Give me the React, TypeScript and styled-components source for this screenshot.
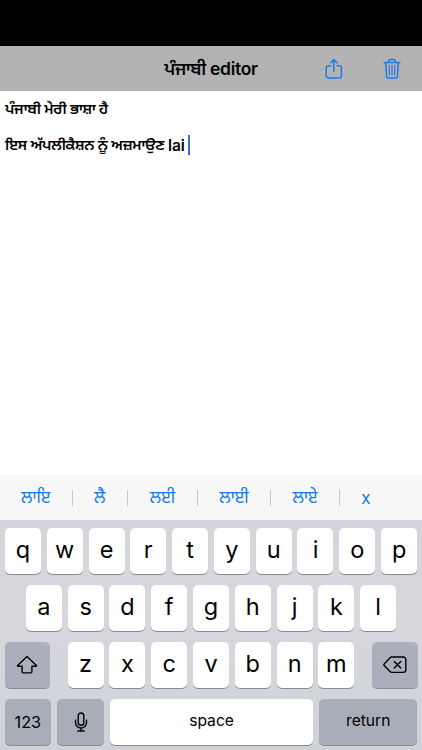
import React from "react";
import styled, { createGlobalStyle } from "styled-components";

const Global = createGlobalStyle`
  * { box-sizing: border-box; }
  html, body, #root { margin: 0; height: 100%; }
  body { background: #fff; overflow: hidden; }
`;

const Screen = styled.div`
  width: 422px;
  height: 750px;
  display: flex;
  flex-direction: column;
  background: #fff;
  font-family: Inter, "Noto Sans Gurmukhi", "Noto Sans", sans-serif;
  color: #000;
`;

const StatusBar = styled.div`
  height: 46px;
  flex: none;
  background: #000;
`;

const NavBar = styled.header`
  height: 45px;
  flex: none;
  display: grid;
  grid-template-columns: 1fr auto 1fr;
  align-items: center;
  background: #b3b3b3;
  border-bottom: 1px solid #b0b0b0;
`;

const Title = styled.h1`
  grid-column: 2;
  margin: 0;
  padding-top: 2px;
  font-size: 17.5px;
  line-height: 24px;
  font-weight: 600;
  letter-spacing: -0.3px;
  white-space: nowrap;
`;

const Actions = styled.div`
  display: flex;
  justify-content: flex-end;
  gap: 38px;
  padding: 1px 20px 0 0;
  color: #1f7ae8;
`;

const IconButton = styled.button`
  width: 20px;
  height: 24px;
  padding: 0;
  border: 0;
  background: none;
  color: inherit;
  svg { display: block; }
`;

const Editor = styled.main`
  flex: 1;
  padding: 0 5px;
  font-size: 15px;
  font-weight: 600;
  letter-spacing: -0.25px;
`;

const Line = styled.p`
  margin: 0;
  height: 36px;
  display: flex;
  align-items: center;
  white-space: pre;
`;

const Latin = styled.span`
  font-size: 15.5px;
  letter-spacing: -0.1px;
`;

const Caret = styled.span`
  width: 2px;
  height: 20px;
  margin-left: 3px;
  background: #4268d8;
`;

const Suggestions = styled.div`
  height: 45px;
  flex: none;
  display: flex;
  align-items: center;
  background: #f7f7f8;
`;

const Suggestion = styled.button<{ $w: number; $last?: boolean }>`
  width: ${(p) => p.$w}px;
  height: 16px;
  display: flex;
  align-items: center;
  justify-content: center;
  padding: ${(p) => (p.$last ? "0" : "2px 0 0")};
  border: 0;
  border-right: ${(p) => (p.$last ? "0" : "1px solid #c8c8cb")};
  background: none;
  color: #1478e6;
  font: inherit;
  font-size: 17px;
  white-space: nowrap;
`;

const Keyboard = styled.div`
  height: 230px;
  flex: none;
  display: flex;
  flex-direction: column;
  gap: 11px;
  padding: 8px 4.5px 0;
  background: linear-gradient(#d4d5db, #d7d8de 40%, #ced2d7);
`;

const Row = styled.div`
  height: 46px;
  display: flex;
  justify-content: center;
  gap: 5.8px;
`;

const SpreadRow = styled(Row)`
  justify-content: space-between;
`;

const Group = styled.div`
  display: flex;
  gap: 5.8px;
`;

const Key = styled.button<{ $w?: number }>`
  width: ${(p) => p.$w ?? 36}px;
  height: 46px;
  flex: none;
  display: flex;
  align-items: center;
  justify-content: center;
  padding: 0 0 4px;
  border: 0;
  border-radius: 5px;
  background: #fff;
  box-shadow: 0 1px 0 #898b90;
  color: #000;
  font: inherit;
  font-size: 23.5px;
  font-weight: 400;
`;

const WordKey = styled(Key)`
  font-size: 15.6px;
`;

const DarkKey = styled(WordKey)<{ $low?: boolean }>`
  background: ${(p) => (p.$low ? "#a7aeb8" : "linear-gradient(#adb0bc, #a9aeba)")};
`;

const SymbolKey = styled(DarkKey)`
  padding-bottom: 0;
  font-size: 16.3px;
`;

const ShareIcon = () => (
  <svg width="20" height="24" viewBox="0 0 20 24" fill="none" stroke="currentColor" strokeWidth="1.5" strokeLinecap="round" strokeLinejoin="round">
    <path d="M6.5 8.7H4.2A2 2 0 0 0 2.2 10.7v8.2a2 2 0 0 0 2 2h11.2a2 2 0 0 0 2-2V10.7a2 2 0 0 0-2-2h-2.3M9.8 14.5V2.7M6.7 5.7l3.1-3.1L12.9 5.7" />
  </svg>
);

const TrashIcon = () => (
  <svg width="20" height="24" viewBox="0 0 20 24" fill="none" stroke="currentColor" strokeWidth="1.5" strokeLinecap="round" strokeLinejoin="round">
    <path d="M2.2 5.5h15.6M6.8 5.3V3.8a1.4 1.4 0 0 1 1.4-1.4h3.6a1.4 1.4 0 0 1 1.4 1.4v1.5M3.7 5.6l.8 13.5a1.9 1.9 0 0 0 1.9 1.8h7.2a1.9 1.9 0 0 0 1.9-1.8l.8-13.5" />
    <path strokeWidth="1.1" d="M7.1 8.4l.3 9.6M10 8.4V18M12.9 8.4l-.3 9.6" />
  </svg>
);

const ShiftIcon = () => (
  <svg width="22" height="20" viewBox="0 0 22 20" fill="none" stroke="currentColor" strokeWidth="1.4" strokeLinejoin="round">
    <path d="M11 1.4 1.6 10.5c-.3.3-.1.7.3.7h4.2v5.6c0 .7.4 1.1 1.1 1.1h7.6c.7 0 1.1-.4 1.1-1.1v-5.6h4.2c.4 0 .6-.4.3-.7Z" />
  </svg>
);

const DeleteIcon = () => (
  <svg width="24" height="18" viewBox="0 0 24 18" fill="none" stroke="currentColor" strokeWidth="1.4" strokeLinecap="round" strokeLinejoin="round">
    <path d="M8.8 1h11.4a2.6 2.6 0 0 1 2.6 2.6v10.2a2.6 2.6 0 0 1-2.6 2.6H8.8a2.6 2.6 0 0 1-1.8-.8L1.2 9.6a1.2 1.2 0 0 1 0-1.7L7 1.8A2.6 2.6 0 0 1 8.8 1ZM11.3 5.4l6.5 6.6M17.8 5.4 11.3 12" />
  </svg>
);

const MicIcon = () => (
  <svg width="14" height="20" viewBox="0 0 14 20" fill="none" stroke="currentColor" strokeWidth="1.4" strokeLinecap="round">
    <rect x="4.2" y="1" width="5.6" height="12.2" rx="2.8" />
    <path d="M1.5 8.3v2.2a5.5 5.5 0 0 0 11 0V8.3M7 16.3V19M3.8 19h6.4" />
  </svg>
);

const words: [string, number][] = [
  ["ਲਾਇ", 72.5],
  ["ਲੈ", 55.5],
  ["ਲਈ", 70],
  ["ਲਾਈ", 73],
  ["ਲਾਏ", 69],
  ["x", 52],
];

const letters = (s: string) => s.split("").map((c) => <Key key={c}>{c}</Key>);

export default function App() {
  return (
    <Screen>
      <Global />
      <StatusBar />
      <NavBar>
        <Title>ਪੰਜਾਬੀ editor</Title>
        <Actions>
          <IconButton aria-label="Share"><ShareIcon /></IconButton>
          <IconButton aria-label="Delete"><TrashIcon /></IconButton>
        </Actions>
      </NavBar>
      <Editor>
        <Line>ਪੰਜਾਬੀ ਮੇਰੀ ਭਾਸ਼ਾ ਹੈ</Line>
        <Line>ਇਸ ਅੱਪਲੀਕੈਸ਼ਨ ਨੂੰ ਅਜ਼ਮਾਉਣ <Latin>lai</Latin><Caret /></Line>
      </Editor>
      <Suggestions>
        {words.map(([w, width], i) => (
          <Suggestion key={w} $w={width} $last={i === words.length - 1}>{w}</Suggestion>
        ))}
      </Suggestions>
      <Keyboard>
        <Row>{letters("qwertyuiop")}</Row>
        <Row>{letters("asdfghjkl")}</Row>
        <SpreadRow>
          <SymbolKey $w={45.5} aria-label="Shift"><ShiftIcon /></SymbolKey>
          <Group>{letters("zxcvbnm")}</Group>
          <SymbolKey $w={45.5} aria-label="Backspace"><DeleteIcon /></SymbolKey>
        </SpreadRow>
        <SpreadRow>
          <SymbolKey $w={46.7} $low>123</SymbolKey>
          <SymbolKey $w={46.7} $low aria-label="Dictate"><MicIcon /></SymbolKey>
          <WordKey $w={202.5}>space</WordKey>
          <DarkKey $w={98.5} $low>return</DarkKey>
        </SpreadRow>
      </Keyboard>
    </Screen>
  );
}
